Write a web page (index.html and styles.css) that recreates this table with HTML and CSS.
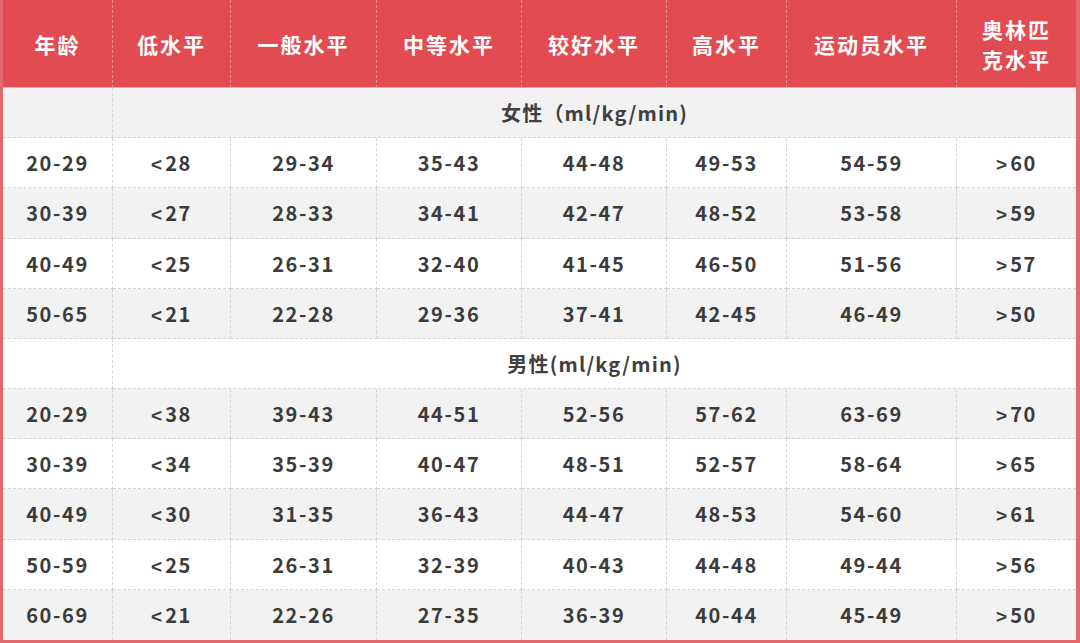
FILE: index.html
```html
<!DOCTYPE html>
<html lang="zh-CN">
<head>
<meta charset="utf-8">
<title>最大摄氧量标准</title>
<link rel="stylesheet" href="styles.css">
</head>
<body>
<div class="table">
  <div class="row head">
    <div>年龄</div><div>低水平</div><div>一般水平</div><div>中等水平</div><div>较好水平</div><div>高水平</div><div>运动员水平</div><div class="two">奥林匹<br>克水平</div>
  </div>
  <div class="row sec alt">
    <div></div><div class="span">女性（ml/kg/min)</div>
  </div>
  <div class="row"><div>20-29</div><div><span class="op">&lt;</span>28</div><div>29-34</div><div>35-43</div><div>44-48</div><div>49-53</div><div>54-59</div><div><span class="op">&gt;</span>60</div></div>
  <div class="row alt"><div>30-39</div><div><span class="op">&lt;</span>27</div><div>28-33</div><div>34-41</div><div>42-47</div><div>48-52</div><div>53-58</div><div><span class="op">&gt;</span>59</div></div>
  <div class="row"><div>40-49</div><div><span class="op">&lt;</span>25</div><div>26-31</div><div>32-40</div><div>41-45</div><div>46-50</div><div>51-56</div><div><span class="op">&gt;</span>57</div></div>
  <div class="row alt"><div>50-65</div><div><span class="op">&lt;</span>21</div><div>22-28</div><div>29-36</div><div>37-41</div><div>42-45</div><div>46-49</div><div><span class="op">&gt;</span>50</div></div>
  <div class="row sec">
    <div></div><div class="span">男性(ml/kg/min)</div>
  </div>
  <div class="row alt"><div>20-29</div><div><span class="op">&lt;</span>38</div><div>39-43</div><div>44-51</div><div>52-56</div><div>57-62</div><div>63-69</div><div><span class="op">&gt;</span>70</div></div>
  <div class="row"><div>30-39</div><div><span class="op">&lt;</span>34</div><div>35-39</div><div>40-47</div><div>48-51</div><div>52-57</div><div>58-64</div><div><span class="op">&gt;</span>65</div></div>
  <div class="row alt"><div>40-49</div><div><span class="op">&lt;</span>30</div><div>31-35</div><div>36-43</div><div>44-47</div><div>48-53</div><div>54-60</div><div><span class="op">&gt;</span>61</div></div>
  <div class="row"><div>50-59</div><div><span class="op">&lt;</span>25</div><div>26-31</div><div>32-39</div><div>40-43</div><div>44-48</div><div>49-44</div><div><span class="op">&gt;</span>56</div></div>
  <div class="row alt last"><div>60-69</div><div><span class="op">&lt;</span>21</div><div>22-26</div><div>27-35</div><div>36-39</div><div>40-44</div><div>45-49</div><div><span class="op">&gt;</span>50</div></div>
</div>
</body>
</html>
```
FILE: styles.css
```css
html, body {
  margin: 0;
  padding: 0;
  background: #ffffff;
}

.table {
  box-sizing: border-box;
  width: 1080px;
  height: 643px;
  border-left: 3px solid #e2686c;
  border-right: 4px solid #e2686c;
  border-bottom: 3px solid #e2686c;
  display: grid;
  grid-template-columns: 110px 118px 146px 145px 145px 120px 170px 1fr;
  grid-template-rows: 88px repeat(11, 1fr);
  font-family: "Noto Sans CJK SC", "Noto Sans", sans-serif;
  font-weight: 700;
  color: #3b3b3b;
}

.row {
  display: contents;
}

.row > div {
  display: flex;
  align-items: baseline;
  justify-content: center;
  padding-top: 10px;
  box-sizing: border-box;
  background: #ffffff;
  border-right: 1px dashed #d6d6d6;
  border-bottom: 1px dashed #d6d6d6;
  font-size: 20px;
  letter-spacing: 1.6px;
  text-align: center;
}

.op {
  font-family: "Liberation Sans", sans-serif;
  font-size: 19px;
  letter-spacing: 0;
  margin-right: 3px;
}

.row > div:last-child {
  border-right: none;
}

.row.alt > div {
  background: #f2f2f2;
}

.row.last > div {
  border-bottom: none;
}

.row.head > div {
  align-items: center;
  padding-top: 0;
  background: #e24b50;
  color: #ffffff;
  font-size: 21px;
  letter-spacing: 2px;
  border-right: 1px dashed #ee8f92;
  border-bottom: 1px solid #f3a9ab;
}

.row.head > div:last-child {
  border-right: none;
}

.row.head > .two {
  line-height: 30px;
}

.row.sec > .span {
  grid-column: 2 / 9;
  border-right: none;
  font-size: 20px;
  letter-spacing: 1.2px;
  color: #404040;
}
```
